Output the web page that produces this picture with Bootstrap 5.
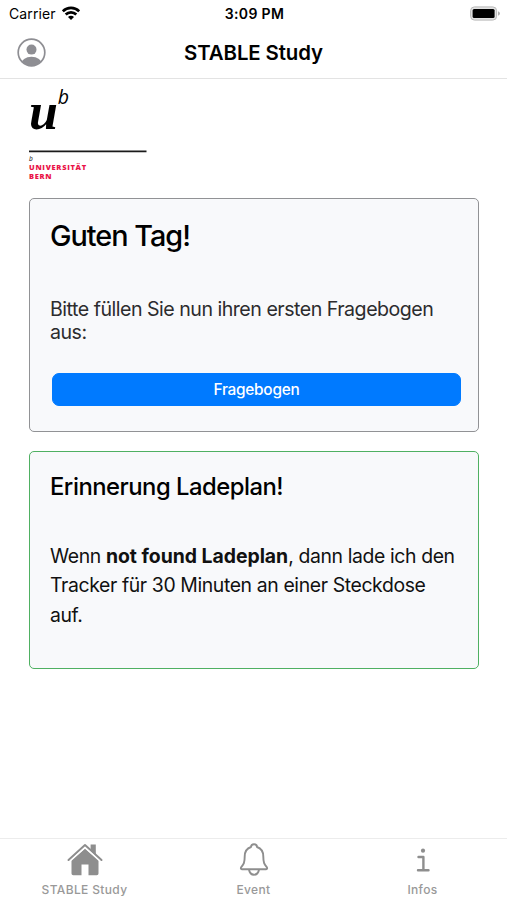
<!DOCTYPE html>
<html lang="de">
<head>
<meta charset="utf-8">
<meta name="viewport" content="width=device-width, initial-scale=1">
<title>STABLE Study</title>
<link rel="stylesheet" href="https://cdn.jsdelivr.net/npm/bootstrap@5.3.0/dist/css/bootstrap.min.css">
<style>
body { font-family: Inter, "Liberation Sans", sans-serif; color: #000; background: #fff; height: 900px; overflow: hidden; }
svg { display: block; flex: none; }
.status { height: 27px; font-size: 14px; line-height: 27px; padding: 0 7px 0 9px; letter-spacing: .1px; }
.status > * { flex: 1 1 0; }
.wifi { margin-left: 6px; }
.clock { font-weight: 600; letter-spacing: .35px; white-space: nowrap; }
.titlebar { height: 52px; border-bottom: 1px solid #e3e3e3; padding: 0 17px; }
.titlebar h1 { font-size: 20.4px; font-weight: 600; line-height: 50px; letter-spacing: -.1px; }
.side { width: 29px; }
.content { padding: 9px 28px 0 29px; }
.uni { height: 110px; overflow: visible; }
.panel { --bs-card-border-color: #919295; --bs-card-border-radius: 5px; --bs-card-bg: #f8f9fb; padding: 19px 17px 0 20px; color: #000; }
.panel-grey { height: 234px; }
.panel.panel-green { height: 218px; margin-top: 19px; padding-top: 20px; border: 1px solid #4fb062; }
.panel h2 { font-size: 28.8px; line-height: 36px; font-weight: 450; letter-spacing: -1px; margin-bottom: 44px; }
.panel-green h2 { font-size: 23.8px; line-height: 30px; letter-spacing: -.49px; margin-bottom: 40px; }
.intro { font-size: 19.6px; line-height: 23px; letter-spacing: -.5px; color: #2c2c2e; margin-bottom: 29px; }
.plan { font-size: 19.4px; line-height: 29.4px; letter-spacing: -.38px; color: #111; }
.plan b { letter-spacing: -.02px; }
.btn-go { --bs-btn-bg: #007aff; --bs-btn-border-color: #007aff; --bs-btn-font-size: 15.4px; --bs-btn-font-weight: 500; --bs-btn-padding-y: 0; --bs-btn-border-radius: 7px; --bs-btn-line-height: 32px; letter-spacing: -.25px; height: 33px; margin: 0 0 0 2px; width: 409px; }
.tabs { height: 62px; border-top: 1px solid #ececec; padding-top: 3px; color: #999; font-size: 12px; font-weight: 500; letter-spacing: .36px; line-height: 15px; }
.tabs span { margin-top: 5px; }
</style>
<script src="https://cdn.jsdelivr.net/npm/bootstrap@5.3.0/dist/js/bootstrap.bundle.min.js"></script>
</head>
<body class="d-flex flex-column">
<div class="status d-flex align-items-center">
  <div class="d-flex align-items-center"><span>Carrier</span>
    <svg class="wifi" width="18" height="15" viewBox="0 0 18 15" fill="none" stroke="#000" stroke-width="2.7"><path d="M.8 5.3a11.6 11.6 0 0 1 16.400 0M3.700 8.500a7.500 7.500 0 0 1 10.600 0"/><path d="M9 14 6 11a4.200 4.200 0 0 1 6 0Z" fill="#000" stroke="none"/></svg>
  </div>
  <div class="clock text-center">3:09 PM</div>
  <div class="d-flex justify-content-end">
    <svg width="30" height="15" viewBox="0 0 30 15"><rect x=".6" y=".9" width="26" height="13.2" rx="3.8" fill="#e2e2e2" stroke="#b9b9b9"/><rect x="2.6" y="3" width="22" height="9" rx="1.5"/><path d="M28 5.2q2 .8 2 2.3t-2 2.3Z" fill="#b0b0b0"/></svg>
  </div>
</div>
<header class="titlebar d-flex align-items-center justify-content-between">
  <div class="side"><svg width="29" height="29" viewBox="0 0 29 29"><defs><clipPath id="disc"><circle cx="14.5" cy="14.5" r="13.2"/></clipPath></defs><circle cx="14.5" cy="14.5" r="13.3" fill="#fff" stroke="#8e8e93" stroke-width="1.7"/><circle cx="14.5" cy="11.6" r="5" fill="#8e8e93"/><ellipse cx="14.5" cy="26.2" rx="10.5" ry="7.4" fill="#8e8e93" clip-path="url(#disc)"/></svg></div>
  <h1 class="m-0">STABLE Study</h1>
  <div class="side"></div>
</header>
<main class="content flex-grow-1">
  <svg class="uni" width="120" height="110" viewBox="0 0 120 110">
    <text x="0" y="40.500" font-family="Liberation Serif, serif" font-size="52" font-weight="700" font-style="italic">u</text>
    <text x="28.800" y="16.200" font-family="Open Sans, sans-serif" font-size="19.500" font-style="italic">b</text>
    <path d="M0 63.300H117.500" stroke="#1a1a1a" stroke-width="1.700"/>
    <text x="0" y="73" font-family="Open Sans, sans-serif" font-size="6.500" font-style="italic">b</text>
    <g font-family="Open Sans, sans-serif" font-size="7.500" font-weight="800" fill="#ea1448"><text x="0" y="82" letter-spacing=".7">UNIVERSITÄT</text><text x="0" y="91" letter-spacing=".7">BERN</text></g>
  </svg>
  <section class="card panel panel-grey">
    <h2>Guten Tag!</h2>
    <p class="intro">Bitte füllen Sie nun ihren ersten Fragebogen aus:</p>
    <button type="button" class="btn btn-primary btn-go">Fragebogen</button>
  </section>
  <section class="card panel panel-green">
    <h2>Erinnerung Ladeplan!</h2>
    <p class="plan mb-0">Wenn <b>not found Ladeplan</b>, dann lade ich den Tracker für 30 Minuten an einer Steckdose auf.</p>
  </section>
</main>
<nav class="tabs row g-0 text-center">
  <div class="col d-flex flex-column align-items-center">
    <svg width="36" height="35" viewBox="0 0 36 35" fill="#8e8e8e"><path d="M18 6.500 31.500 18V31.500q0 1.800-1.800 1.800H21.500V22.500h-7V33.300H6.300q-1.800 0-1.800-1.800V18Z"/><path d="M23.600 2.500h5.200v10.300l-5.200-4.600Z"/><path d="M1.500 18 18 3 34.500 18" fill="none" stroke="#8e8e8e" stroke-width="2" stroke-linecap="round" stroke-linejoin="round"/><path d="M3.800 18.600 18 5.700 32.200 18.600" fill="none" stroke="#fff" stroke-width="1.300"/></svg>
    <span>STABLE Study</span></div>
  <div class="col d-flex flex-column align-items-center">
    <svg width="30" height="35" viewBox="0 0 30 35" fill="none" stroke="#8e8e8e" stroke-width="1.900" stroke-linejoin="round"><path d="M12 5q0-2.800 3-2.800T18 5c5.300 1.800 6.300 5.800 6.300 9.500 0 6.500 1.200 7.800 3.400 10.500.8 1.200.4 2.300-1 2.300H3.300c-1.400 0-1.800-1.100-1-2.300 2.200-2.700 3.400-4 3.400-10.500C5.700 10.800 6.700 6.800 12 5Z"/><path d="M10 27.500q.8 5.200 5 5.200t5-5.200"/></svg>
    <span>Event</span></div>
  <div class="col d-flex flex-column align-items-center">
    <svg width="20" height="35" viewBox="0 0 20 35" fill="none" stroke="#8e8e8e" stroke-width="2.400" stroke-linecap="round" stroke-linejoin="round"><circle cx="10" cy="8.700" r="2.100" fill="#8e8e8e" stroke="none"/><path d="M5.500 15H10.400V28.300M5 28.300H15.500"/></svg>
    <span>Infos</span></div>
</nav>
</body>
</html>
